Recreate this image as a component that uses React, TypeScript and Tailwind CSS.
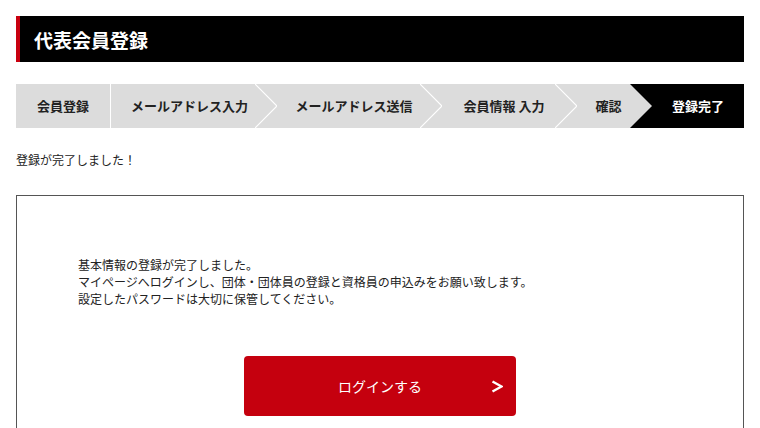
const font = { fontFamily: '"Noto Sans CJK JP", "Noto Sans", sans-serif' };

function Chevron({ last }: { last?: boolean }) {
  // thin white chevron between steps; the last one sits on black
  return (
    <svg width="22" height="44" viewBox="0 0 22 44" className="block flex-none">
      {last ? (
        <>
          <rect width="22" height="44" fill="#000" />
          <polygon points="0,0 22,22 0,44" fill="#dcdcdc" />
        </>
      ) : (
        <>
          <rect width="22" height="44" fill="#dcdcdc" />
          <polyline points="0,0 22,22 0,44" fill="none" stroke="#fff" strokeWidth="1.2" />
        </>
      )}
    </svg>
  );
}

export default function App() {
  return (
    <div className="min-h-screen bg-white px-4 pt-4 text-[#222]" style={font}>
      <div className="flex h-[46px] items-center border-l-4 border-[#c8000f] bg-black pl-[14px]">
        <h1 className="text-[19px] font-bold leading-none text-white">代表会員登録</h1>
      </div>

      <div className="mt-[22px] flex h-[44px] items-stretch bg-[#dcdcdc] text-[13px] font-bold">
        <div className="flex w-[94px] items-center justify-center">会員登録</div>
        <div className="w-px bg-white" />
        <div className="flex w-[144px] items-center justify-center pl-[13px]">メールアドレス入力</div>
        <Chevron />
        <div className="flex w-[143px] items-center justify-center pl-[11px]">メールアドレス送信</div>
        <Chevron />
        <div className="flex w-[113px] items-center justify-center pl-[11px]">会員情報 入力</div>
        <Chevron />
        <div className="flex w-[53px] items-center justify-center pl-[10px]">確認</div>
        <Chevron last />
        <div className="flex flex-1 items-center justify-center bg-black text-white">登録完了</div>
      </div>

      <p className="mt-[23px] text-[12px] leading-[18px]">登録が完了しました！</p>

      <div className="mt-[26px] h-[260px] border border-[#555] pl-[61px] pt-[60px]">
        <div className="text-[12px] leading-[17px]">
          <p>基本情報の登録が完了しました。</p>
          <p>マイページへログインし、団体・団体員の登録と資格員の申込みをお願い致します。</p>
          <p>設定したパスワードは大切に保管してください。</p>
        </div>
        <div className="-ml-[61px] mt-[49px] flex justify-center">
          <button className="grid h-[60px] w-[272px] grid-cols-[1fr_auto_1fr] items-center rounded-[4px] bg-[#c5000e] text-white">
            <span />
            <span className="text-[14px]">ログインする</span>
            <span className="flex justify-end pr-[13px]">
              <svg width="12" height="13" viewBox="0 0 12 13">
                <polyline points="1.5,1.5 10.5,6.5 1.5,11.5" fill="none" stroke="#fff" strokeWidth="2.4" strokeLinejoin="miter" />
              </svg>
            </span>
          </button>
        </div>
      </div>
    </div>
  );
}
